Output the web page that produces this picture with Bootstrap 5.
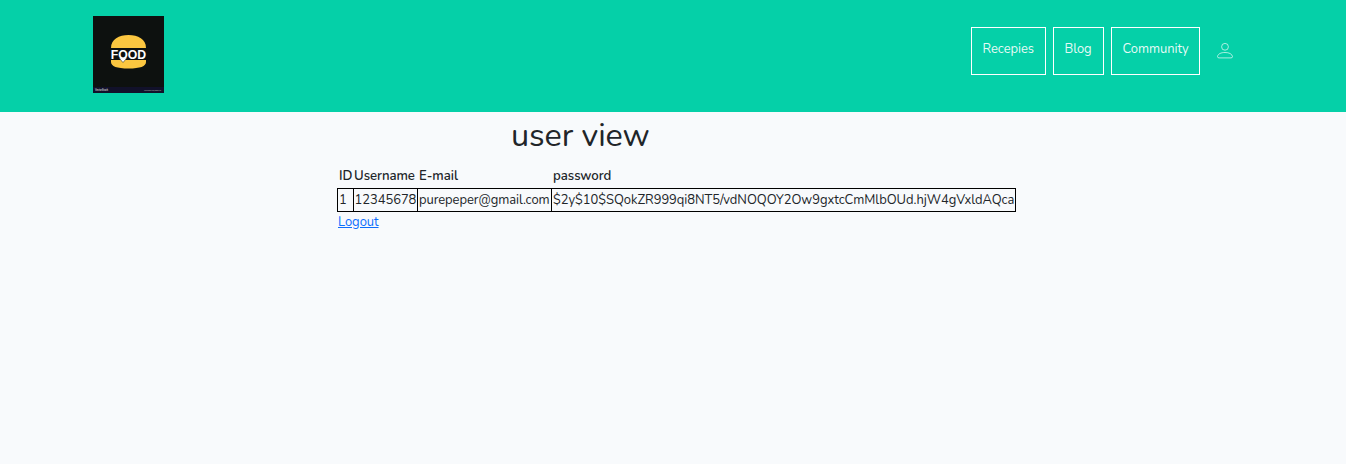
<!DOCTYPE html>
<html lang="en">
<head>
<meta charset="utf-8">
<meta name="viewport" content="width=device-width, initial-scale=1">
<title>user view</title>
<link href="https://cdn.jsdelivr.net/npm/bootstrap@5.3.0/dist/css/bootstrap.min.css" rel="stylesheet">
<style>
body{font-family:Nunito,Lato,sans-serif;font-size:12.96px;letter-spacing:-.04px;line-height:20px;background:#f8fafc;color:#212529}
.site-head{background:#05d0a8;height:112px;padding:16px 113px 0 93px}
.brand-logo{width:71px;height:77px;letter-spacing:0}
.menu{gap:7px;padding-top:11px}
.menu-box{height:48px;border:1px solid #fff;color:rgba(255,255,255,.92);padding:11px 0 0 10.5px;line-height:20px;text-decoration:none;white-space:nowrap}
.w-rec{width:75px}.w-blog{width:51px}.w-com{width:89px}
.user-link{margin:16px 0 0 10px;line-height:0}
.view-title{font-size:32.4px;letter-spacing:-.08px;line-height:40px;margin:3px 0 9px 174px}
.user-area{width:679px;margin-left:337px}
.user-table{table-layout:fixed;width:679px;border-collapse:collapse;white-space:nowrap}
.user-table th{height:24px;padding:0 1.5px;font-weight:600;font-size:13.2px}
.user-table td{height:23px;padding:0 1px;border:1px solid #000}
.user-table th:nth-child(2),.user-table td:nth-child(2){padding-left:.5px}
.logout{margin-left:1px;line-height:20px;color:#0d6efd}
</style>
</head>
<body>
<header class="site-head d-flex justify-content-between align-items-start">
  <a href="#" class="d-block brand-logo" aria-label="Food">
    <svg class="d-block" width="71" height="77" viewBox="0 0 71 77">
      <rect width="71" height="77" fill="#0d110f"/>
      <rect y="71" width="71" height="6" fill="#11112a"/>
      <path d="M18 32C18 23 26 19 35.5 19S53 23 53 32z" fill="#fbc740"/>
      <path d="M18 44H53V46Q53 52.500 35.500 52.500T18 46z" fill="#fbc740"/>
      <path d="M26 42L30 46.500L34 42z" fill="#fff" stroke="#0d110f" stroke-width=".5"/>
      <text x="17.800" y="42.700" textLength="35.400" lengthAdjust="spacingAndGlyphs" font-family="'Liberation Sans',sans-serif" font-weight="700" font-size="12.500" fill="#fff">FOOD</text>
      <text x="2" y="75.200" textLength="13" lengthAdjust="spacingAndGlyphs" font-family="Lato,sans-serif" font-size="3" font-weight="700" fill="#ccc">VectorStock</text>
      <text x="51" y="75" textLength="17" lengthAdjust="spacingAndGlyphs" font-family="Lato,sans-serif" font-size="2" fill="#bbb">VectorStock.com/30898430</text>
    </svg>
  </a>
  <nav class="menu d-flex align-items-start">
    <a href="#" class="menu-box w-rec">Recepies</a>
    <a href="#" class="menu-box w-blog">Blog</a>
    <a href="#" class="menu-box w-com">Community</a>
    <a href="#" class="user-link" aria-label="Account">
      <svg width="16" height="16" viewBox="0 0 16 16" fill="none" stroke="#fff" stroke-opacity=".65"><circle cx="8" cy="3.800" r="3.400"/><path d="M2 14.900H14Q15.500 14.900 15.500 13.500C15 10.800 12 9.500 8 9.500S1 10.800.5 13.500Q.5 14.900 2 14.900z"/></svg>
    </a>
  </nav>
</header>
<main class="user-area">
  <h1 class="view-title fw-normal">user view</h1>
  <table class="user-table">
    <colgroup><col style="width:16px"><col style="width:64px"><col style="width:134px"><col></colgroup>
    <thead><tr><th>ID</th><th>Username</th><th>E-mail</th><th>password</th></tr></thead>
    <tbody><tr><td>1</td><td>12345678</td><td>purepeper@gmail.com</td><td>$2y$10$SQokZR999qi8NT5/vdNOQOY2Ow9gxtcCmMlbOUd.hjW4gVxldAQca</td></tr></tbody>
  </table>
  <a href="#" class="logout">Logout</a>
</main>
<script src="https://cdn.jsdelivr.net/npm/bootstrap@5.3.0/dist/js/bootstrap.bundle.min.js"></script>
</body>
</html>
